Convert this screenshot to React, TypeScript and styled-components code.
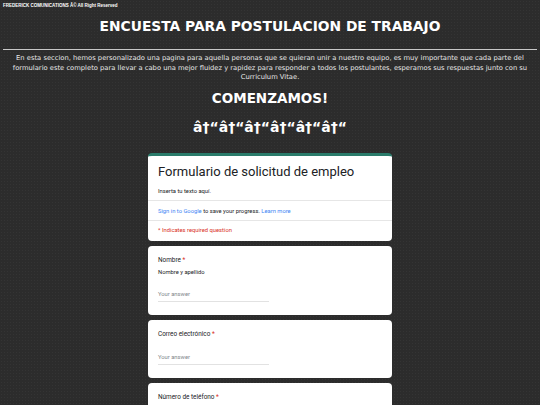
import styled, { createGlobalStyle } from "styled-components";

const GlobalStyle = createGlobalStyle`
  html, body {
    margin: 0;
    padding: 0;
    background: #2c2c2c;
  }
`;

const Page = styled.div`
  min-height: 100vh;
  background-color: #2c2c2c;
  background-image: radial-gradient(rgba(255, 255, 255, 0.04) 0.6px, transparent 0.8px);
  background-size: 3px 3px;
  color: #ffffff;
  font-family: "DejaVu Sans", Verdana, sans-serif;
  padding-bottom: 20px;
`;

const Copyright = styled.p`
  margin: 0;
  padding: 3px 3px 0;
  font-family: "Liberation Sans", Arial, sans-serif;
  font-size: 4.5px;
  font-weight: bold;
  line-height: 5px;
  color: #ffffff;
`;

const Title = styled.h1`
  margin: 11px 0 0;
  text-align: center;
  font-size: 13.8px;
  line-height: 15px;
  font-weight: bold;
`;

const Rule = styled.hr`
  margin: 15px 3px 0;
  border: 0;
  border-top: 1px solid #c8c8c8;
`;

const Intro = styled.p`
  margin: 4px 0 0;
  padding: 0 6px;
  text-align: center;
  font-size: 6.75px;
  line-height: 9.5px;
  color: #e6e6e6;
`;

const Heading = styled.h2<{ $gap: number }>`
  margin: ${(p) => p.$gap}px 0 0;
  text-align: center;
  font-size: 13.5px;
  line-height: 16px;
  font-weight: bold;
`;

const Arrows = styled(Heading)`
  font-size: 14px;
`;

const FormColumn = styled.div`
  width: 244px;
  margin: 18px auto 0;
  display: flex;
  flex-direction: column;
  gap: 5px;
  font-family: Roboto, "Liberation Sans", Arial, sans-serif;
  color: #202124;
`;

const Card = styled.section`
  background: #ffffff;
  border-radius: 4px;
  overflow: hidden;
`;

const HeaderCard = styled(Card)`
  border-top: 3px solid #2a7b6a;
`;

const CardBlock = styled.div<{ $bordered?: boolean }>`
  padding: 0 10px;
  border-top: ${(p) => (p.$bordered ? "1px solid #e6e6e6" : "none")};
`;

const FormTitle = styled.div`
  padding-top: 7px;
  font-size: 13px;
  line-height: 18px;
`;

const SmallText = styled.div<{ $color?: string; $top?: number; $bottom?: number }>`
  font-size: 5.8px;
  line-height: 8px;
  color: ${(p) => p.$color || "#202124"};
  padding-top: ${(p) => p.$top ?? 0}px;
  padding-bottom: ${(p) => p.$bottom ?? 0}px;
`;

const Link = styled.span`
  color: #4285f4;
`;

const Question = styled(Card)`
  padding: 10px 10px 0;
`;

const Label = styled.div`
  font-size: 6.4px;
  line-height: 9px;
  color: #202124;
`;

const Star = styled.span`
  color: #d93025;
`;

const Help = styled.div`
  font-size: 5.8px;
  line-height: 8px;
  margin-top: 3px;
`;

const Answer = styled.div`
  width: 111px;
  margin-top: 14px;
  margin-bottom: 13px;
  padding-bottom: 3px;
  border-bottom: 1px solid #e2e2e2;
  font-size: 5.8px;
  line-height: 8px;
  color: #80868b;
`;

const questions = [
  { label: "Nombre", help: "Nombre y apellido" },
  { label: "Correo electrónico" },
  { label: "Número de teléfono" },
];

const App = () => {
  return (
    <Page>
      <GlobalStyle />
      <Copyright>FREDERICK COMUNICATIONS Â© All Right Reserved</Copyright>
      <Title>ENCUESTA PARA POSTULACION DE TRABAJO</Title>
      <Rule />
      <Intro>
        En esta seccion, hemos personalizado una pagina para aquella personas que se quieran unir a
        nuestro equipo, es muy importante que cada parte del formulario este completo para llevar a
        cabo una mejor fluidez y rapidez para responder a todos los postulantes, esperamos sus
        respuestas junto con su Curriculum Vitae.
      </Intro>
      <Heading $gap={7}>COMENZAMOS!</Heading>
      <Arrows $gap={13}>â†“â†“â†“â†“â†“â†“</Arrows>

      <FormColumn>
        <HeaderCard>
          <CardBlock>
            <FormTitle>Formulario de solicitud de empleo</FormTitle>
            <SmallText $top={6} $bottom={5}>
              Inserta tu texto aquí.
            </SmallText>
          </CardBlock>
          <CardBlock $bordered>
            <SmallText $top={6} $bottom={5}>
              <Link>Sign in to Google</Link> to save your progress. <Link>Learn more</Link>
            </SmallText>
          </CardBlock>
          <CardBlock $bordered>
            <SmallText $color="#d93025" $top={5} $bottom={7}>
              * Indicates required question
            </SmallText>
          </CardBlock>
        </HeaderCard>

        {questions.map((q) => (
          <Question key={q.label}>
            <Label>
              {q.label} <Star>*</Star>
            </Label>
            {q.help && <Help>{q.help}</Help>}
            <Answer>Your answer</Answer>
          </Question>
        ))}
      </FormColumn>
    </Page>
  );
};

export default App;
